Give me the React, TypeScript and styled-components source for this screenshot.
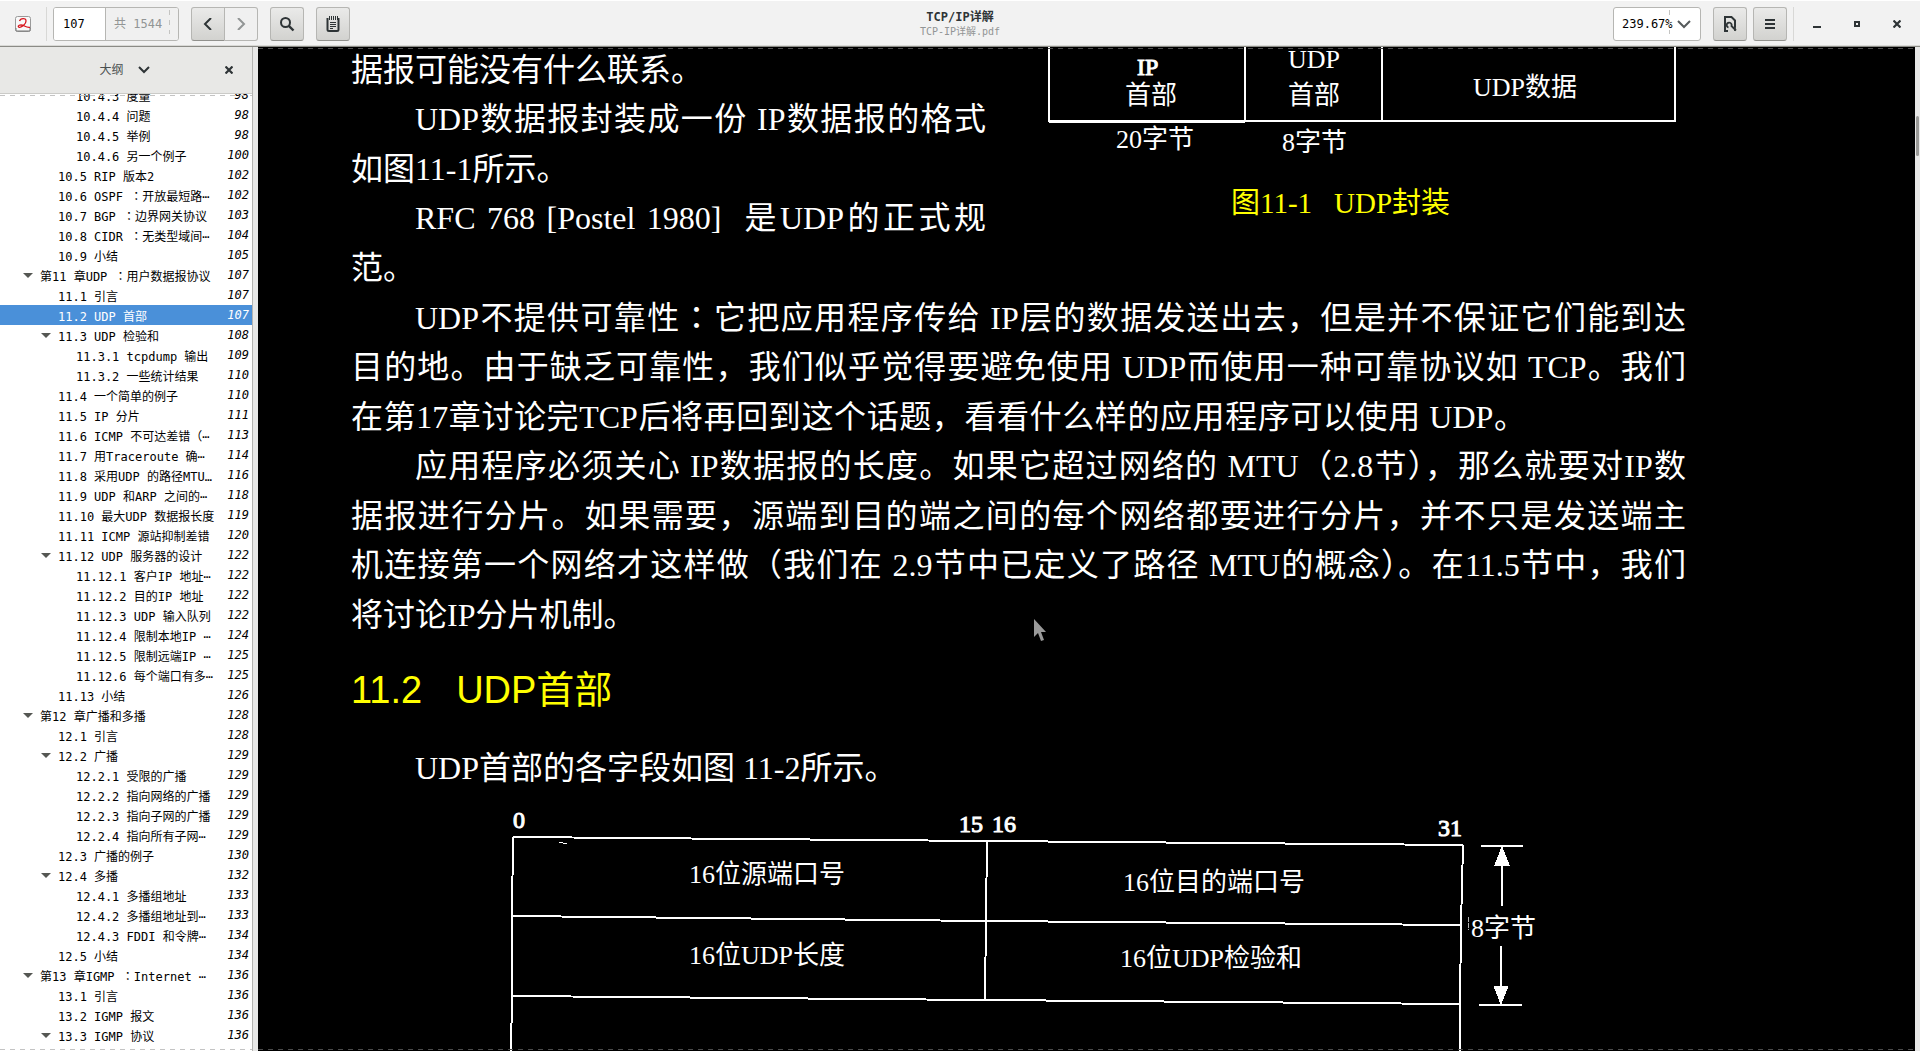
import React from "react";
import styled, { createGlobalStyle, css } from "styled-components";

const ui = `"DejaVu Sans Mono", "Noto Sans CJK SC", monospace`;
const serif = `"Liberation Serif", "Noto Sans CJK SC", serif`;
const sans = `"Liberation Sans", "Noto Sans CJK SC", sans-serif`;

const GlobalStyle = createGlobalStyle`
  *, *::before, *::after { box-sizing: border-box; }
  body { margin: 0; font: 12px/20px ${ui}; color: #000; background: #000; }
  button, input { font: inherit; color: inherit; margin: 0; }
  button { padding: 0; border: 0; background: none; }
`;

const Window = styled.div`
  display: flex;
  flex-direction: column;
  height: 100vh;
  overflow: hidden;
`;

/* ---------- title bar ---------- */

const HeaderBar = styled.header`
  display: grid;
  grid-template-columns: 1fr auto 1fr;
  align-items: center;
  flex: none;
  height: 47px;
  background: #f2f2f2;
  border-top: 1px solid #fff;
  border-bottom: 1px solid #8b8b86;
  box-shadow: inset 0 -1px #d9d9d6;
`;

const Group = styled.div<{ $end?: boolean }>`
  display: flex;
  align-items: center;
  justify-content: ${(p) => (p.$end ? "flex-end" : "flex-start")};
`;

const AppIcon = styled.svg`
  display: block;
  width: 16px;
  height: 16px;
  margin: 0 15px;
`;

const Separator = styled.div`
  width: 1px;
  height: 34px;
  background: #d8d8d6;
`;

const Entry = styled.div<{ $width: number }>`
  display: flex;
  align-items: center;
  width: ${(p) => p.$width}px;
  height: 34px;
  background: #fff;
  border: 1px solid #b6b6b3;
  border-radius: 3px;
  overflow: hidden;
`;

const PageInput = styled.input`
  width: 52px;
  height: 100%;
  padding: 0 9px;
  border: 0;
  border-right: 1px solid #b6b6b3;
  background: #fff;
`;

const dashedEdge = css`
  content: "";
  position: absolute;
  top: 2px;
  bottom: 6px;
  width: 1px;
  background: repeating-linear-gradient(to bottom, #c4c4c2 0 5px, transparent 5px 10px);
`;

const PageTotal = styled.span`
  position: relative;
  flex: 1;
  align-self: stretch;
  padding-left: 8px;
  line-height: 32px;
  color: #929595;
  background: #f0f0f0;
  &::after { ${dashedEdge} right: 8px; }
`;

const ZoomField = styled.label`
  position: relative;
  height: 100%;
  &::after { ${dashedEdge} right: 4px; }
`;

const ZoomInput = styled.input`
  width: 60px;
  height: 100%;
  padding: 0 0 0 8px;
  border: 0;
  background: transparent;
`;

const DropButton = styled.button`
  flex: 1;
  height: 100%;
  display: grid;
  place-items: center start;
  padding-left: 3px;
`;

const ToolButton = styled.button<{ $flat?: boolean; $side?: "left" | "right" }>`
  display: grid;
  place-items: center;
  width: ${(p) => (p.$side === "right" ? 33 : 34)}px;
  height: 34px;
  border: 1px solid #b6b6b3;
  border-bottom-color: ${(p) => (p.$flat ? "#b6b6b3" : "#91918d")};
  border-radius: ${(p) =>
    p.$side === "left" ? "3px 0 0 3px" : p.$side === "right" ? "0 3px 3px 0" : "3px"};
  border-left-width: ${(p) => (p.$side === "right" ? 0 : 1)}px;
  background: ${(p) => (p.$flat ? "#f0f0f0" : "linear-gradient(#eaeae9, #d2d2cf)")};
`;

const Nav = styled.div`
  display: flex;
  margin: 0 12px;
`;

const LeftTools = styled.div`
  display: flex;
  gap: 12px;
`;

const RightTools = styled.div`
  display: flex;
  gap: 6px;
  margin: 0 6px 0 12px;
`;

const PageBox = styled.div`
  margin-left: 6px;
`;

const WindowControls = styled.div`
  display: flex;
  gap: 16px;
  padding: 0 11px;
`;

const WindowButton = styled.button`
  display: grid;
  place-items: center;
  width: 24px;
  height: 24px;
`;

const Titles = styled.div`
  text-align: center;
`;

const Title = styled.h1`
  margin: 0;
  font-size: 12px;
  font-weight: 700;
  line-height: 16px;
  color: #2e3436;
`;

const Subtitle = styled.div`
  font-size: 10px;
  line-height: 14px;
  color: #929595;
`;

/* ---------- outline ---------- */

const Body = styled.div`
  display: flex;
  flex: 1;
  min-height: 0;
`;

const Sidebar = styled.aside`
  display: flex;
  flex-direction: column;
  flex: none;
  width: 253px;
  background: #fff;
  border-right: 1px solid #b4b4b1;
`;

const Handle = styled.div`
  flex: none;
  width: 5px;
  background: #e8e8e7;
`;

const SidebarHeader = styled.div`
  display: grid;
  grid-template-columns: 1fr auto;
  align-items: center;
  flex: none;
  height: 47px;
  padding: 0 17px 0 26px;
  background: #e8e8e6;
  border-bottom: 1px solid #cbcbc8;
`;

const OutlineButton = styled.button`
  display: flex;
  align-items: center;
  justify-content: center;
  gap: 14px;
  color: #4a4f50;
`;

const CloseButton = styled.button`
  display: grid;
  place-items: center;
  width: 12px;
  height: 24px;
`;

const dashes = (color: string) => css`
  position: relative;
  &::before, &::after {
    content: "";
    position: absolute;
    z-index: 1;
    left: 0;
    right: 0;
    height: 1px;
    background: repeating-linear-gradient(to right, ${color} 0 5px, transparent 5px 10px);
  }
  &::before { top: 1px; }
  &::after { bottom: 1px; }
`;

const TreePane = styled.nav`
  flex: 1;
  min-height: 0;
  overflow: hidden;
  ${dashes("#c4c4c4")}
`;

const Tree = styled.ul`
  list-style: none;
  margin: -9px 0 0;
  padding: 0;
`;

const Row = styled.button<{ $level: number; $selected: boolean }>`
  display: flex;
  width: 100%;
  height: 20px;
  padding: 0 3px 0 ${(p) => 5 + p.$level * 18}px;
  white-space: pre;
  text-align: left;
  color: ${(p) => (p.$selected ? "#fff" : "#000")};
  background: ${(p) => (p.$selected ? "#4a90d9" : "transparent")};
`;

const Expander = styled.span<{ $open: boolean }>`
  align-self: center;
  width: 10px;
  margin-right: 7px;
  border: 5px solid transparent;
  border-bottom-width: 0;
  border-top-color: ${(p) => (p.$open ? "#555753" : "transparent")};
`;

const RowLabel = styled.span`
  flex: 1;
  line-height: 25px;
`;

const RowPage = styled.span`
  font-style: italic;
  line-height: 21px;
`;

/* The colon sits in the middle of its cell. */
const Colon = styled.span`
  font-family: "Noto Sans CJK TC", sans-serif;
  line-height: 0;
`;

const withColon = (text: string) => {
  const [before, after] = text.split("：");
  return after === undefined ? (
    text
  ) : (
    <>
      {before}
      <Colon>：</Colon>
      {after}
    </>
  );
};

type Item = [level: number, label: string, page: number, open?: boolean];

const outline: Item[] = [
  [3, "10.4.3 度量", 98],
  [3, "10.4.4 问题", 98],
  [3, "10.4.5 举例", 98],
  [3, "10.4.6 另一个例子", 100],
  [2, "10.5 RIP 版本2", 102],
  [2, "10.6 OSPF ：开放最短路⋯", 102],
  [2, "10.7 BGP ：边界网关协议", 103],
  [2, "10.8 CIDR ：无类型域间⋯", 104],
  [2, "10.9 小结", 105],
  [1, "第11 章UDP ：用户数据报协议", 107, true],
  [2, "11.1 引言", 107],
  [2, "11.2 UDP 首部", 107],
  [2, "11.3 UDP 检验和", 108, true],
  [3, "11.3.1 tcpdump 输出", 109],
  [3, "11.3.2 一些统计结果", 110],
  [2, "11.4 一个简单的例子", 110],
  [2, "11.5 IP 分片", 111],
  [2, "11.6 ICMP 不可达差错（⋯", 113],
  [2, "11.7 用Traceroute 确⋯", 114],
  [2, "11.8 采用UDP 的路径MTU…", 116],
  [2, "11.9 UDP 和ARP 之间的⋯", 118],
  [2, "11.10 最大UDP 数据报长度", 119],
  [2, "11.11 ICMP 源站抑制差错", 120],
  [2, "11.12 UDP 服务器的设计", 122, true],
  [3, "11.12.1 客户IP 地址⋯", 122],
  [3, "11.12.2 目的IP 地址", 122],
  [3, "11.12.3 UDP 输入队列", 122],
  [3, "11.12.4 限制本地IP ⋯", 124],
  [3, "11.12.5 限制远端IP ⋯", 125],
  [3, "11.12.6 每个端口有多⋯", 125],
  [2, "11.13 小结", 126],
  [1, "第12 章广播和多播", 128, true],
  [2, "12.1 引言", 128],
  [2, "12.2 广播", 129, true],
  [3, "12.2.1 受限的广播", 129],
  [3, "12.2.2 指向网络的广播", 129],
  [3, "12.2.3 指向子网的广播", 129],
  [3, "12.2.4 指向所有子网⋯", 129],
  [2, "12.3 广播的例子", 130],
  [2, "12.4 多播", 132, true],
  [3, "12.4.1 多播组地址", 133],
  [3, "12.4.2 多播组地址到⋯", 133],
  [3, "12.4.3 FDDI 和令牌⋯", 134],
  [2, "12.5 小结", 134],
  [1, "第13 章IGMP ：Internet ⋯", 136, true],
  [2, "13.1 引言", 136],
  [2, "13.2 IGMP 报文", 136],
  [2, "13.3 IGMP 协议", 136, true],
];

/* ---------- document ---------- */

const Viewer = styled.main`
  flex: 1;
  min-width: 0;
  overflow: hidden;
  background: #000;
  ${dashes("#4a4a4a")}
`;

const Page = styled.article`
  margin-top: -2px;
  padding: 0 229px 0 93px;
  color: #fff;
  font: 32px/50px ${serif};
`;

const Opening = styled.section`
  display: grid;
  grid-template-columns: 635px 1fr;
  column-gap: 54px;
`;

const TextBlock = styled.div``;

const Line = styled.div<{ $indent?: boolean; $last?: boolean; $short?: boolean }>`
  white-space: nowrap;
  text-indent: ${(p) => (p.$indent ? "2em" : 0)};
  padding-right: ${(p) => (p.$short ? 160 : 0)}px;
  text-align: justify;
  text-align-last: ${(p) => (p.$last ? "left" : "justify")};
  &:nth-child(even) { line-height: 49px; }
`;

const Figure = styled.figure`
  margin: 0;
`;

const Drawing = styled.svg`
  display: block;
  fill: none;
  stroke: #fff;
  stroke-width: 2;
  shape-rendering: crispEdges;
`;

const Label = styled.text<{ $heavy?: boolean }>`
  fill: #fff;
  stroke: ${(p) => (p.$heavy ? "#fff" : "none")};
  stroke-width: 1;
  font: ${(p) => (p.$heavy ? 24 : 26)}px ${serif};
`;

const Caption = styled.figcaption`
  display: flex;
  gap: 22px;
  margin-top: 19px;
  padding-left: 191px;
  font-size: 29px;
  line-height: 36px;
  color: #ff0;
`;

const Heading = styled.h2`
  display: flex;
  gap: 34px;
  margin: 25px 0 29px;
  font: 400 38px/50px ${sans};
  color: #ff0;
`;

const HeaderFigure = styled(Figure)`
  margin: 13px 0 0 149px;
`;

const Scrollbar = styled.div`
  flex: none;
  width: 5px;
  padding: 69px 1px 0;
  background: #e8e8e7;
`;

const Thumb = styled.div`
  height: 40px;
  border-radius: 2px;
  background: #9a9a98;
`;

const Pointer = styled.svg`
  position: absolute;
  left: 775px;
  top: 571px;
  width: 14px;
  height: 24px;
`;

const ink = "#2e3436";

const Chevron = ({ d, color = ink, w = 12, h = 12 }: { d: string; color?: string; w?: number; h?: number }) => (
  <svg width={w} height={h} viewBox={`0 0 ${w} ${h}`} fill="none" stroke={color} strokeWidth="2">
    <path d={d} />
  </svg>
);

const Cross = () => (
  <svg width="8" height="8" viewBox="0 0 8 8" fill="none" stroke={ink} strokeWidth="2.2">
    <path d="M.5.5l7 7M7.5.5l-7 7" />
  </svg>
);

export default function App() {
  return (
    <Window>
      <GlobalStyle />
      <HeaderBar>
        <Group>
          <AppIcon viewBox="0 0 16 16">
            <rect x=".5" y=".5" width="15" height="15" rx="2" fill="#f8f8f8" stroke="#9a9a9a" />
            <path d="M1 12v2.500q0 .5.5.5h13q.5 0 .5-.5V12" fill="none" stroke="#777" />
            <path
              d="M4.500 5C5.500 2 11 1.500 11 5C11 8 7 11.500 4.500 11.300C2.500 11 3 8.800 6 8.800C9 9 11 12 15 11.300"
              fill="none"
              stroke="#d8141c"
              strokeWidth="1.300"
            />
          </AppIcon>
          <Separator />
          <PageBox>
            <Entry $width={126}>
              <PageInput aria-label="页码" defaultValue="107" />
              <PageTotal>共 1544</PageTotal>
            </Entry>
          </PageBox>
          <Nav>
            <ToolButton $side="left" aria-label="上一页">
              <Chevron d="M9 0L3 6l6 6" />
            </ToolButton>
            <ToolButton $side="right" $flat aria-label="下一页">
              <Chevron d="M3 0l6 6-6 6" color="#929595" />
            </ToolButton>
          </Nav>
          <LeftTools>
            <ToolButton aria-label="查找">
              <svg width="16" height="16" viewBox="0 0 16 16" fill="none" stroke={ink}>
                <circle cx="6.500" cy="6.500" r="4.500" strokeWidth="2" />
                <path d="M9.800 9.800l4.700 4.700" strokeWidth="2.400" />
              </svg>
            </ToolButton>
            <ToolButton aria-label="批注">
              <svg width="16" height="18" viewBox="0 0 16 18" fill="none" stroke={ink}>
                <path d="M2.500 3v11.500q0 1.500 1.500 1.500h8q1.500 0 1.500-1.500V3" strokeWidth="2" />
                <path d="M4.500 1v4M6.500 1v4M8.500 1v4M10.500 1v4M12.500 1v4" />
                <path d="M5 7.500h6M5 9.500h6M5 11.500h6M5 13.500h3" />
              </svg>
            </ToolButton>
          </LeftTools>
        </Group>
        <Titles>
          <Title>TCP/IP详解</Title>
          <Subtitle>TCP-IP详解.pdf</Subtitle>
        </Titles>
        <Group $end>
          <Entry $width={88}>
            <ZoomField>
              <ZoomInput aria-label="缩放" defaultValue="239.67%" />
            </ZoomField>
            <DropButton aria-label="缩放级别">
              <Chevron d="M1 2l6 6 6-6" w={14} h={10} color="#555a5b" />
            </DropButton>
          </Entry>
          <RightTools>
            <ToolButton aria-label="文档">
              <svg width="14" height="16" viewBox="0 0 14 16" fill="none" stroke={ink} strokeWidth="2">
                <path d="M5 15H2V1h6.500L12 4.500V11" />
                <path d="M5.500 11.500A2.500 2.500 0 1 1 8.500 10L13 14.500M12 8v7" strokeWidth="1.800" />
              </svg>
            </ToolButton>
            <ToolButton aria-label="菜单">
              <svg width="10" height="10" viewBox="0 0 10 10" fill={ink}>
                <path d="M0 0h10v2H0zM0 4h10v2H0zM0 8h10v2H0z" />
              </svg>
            </ToolButton>
          </RightTools>
          <Separator />
          <WindowControls>
            <WindowButton aria-label="最小化">
              <svg width="8" height="8" viewBox="0 0 8 8"><path d="M0 6h8v2H0z" fill={ink} /></svg>
            </WindowButton>
            <WindowButton aria-label="最大化">
              <svg width="6" height="6" viewBox="0 0 6 6" fill="none" stroke={ink} strokeWidth="2">
                <path d="M1 1h4v4H1z" />
              </svg>
            </WindowButton>
            <WindowButton aria-label="关闭"><Cross /></WindowButton>
          </WindowControls>
        </Group>
      </HeaderBar>

      <Body>
        <Sidebar>
          <SidebarHeader>
            <OutlineButton>
              大纲
              <Chevron d="M1 1l5 5 5-5" h={8} />
            </OutlineButton>
            <CloseButton aria-label="关闭侧栏"><Cross /></CloseButton>
          </SidebarHeader>
          <TreePane>
            <Tree>
              {outline.map(([level, label, page, open]) => (
                <li key={label}>
                  <Row $level={level} $selected={label === "11.2 UDP 首部"}>
                    <Expander $open={!!open} />
                    <RowLabel>{withColon(label)}</RowLabel>
                    <RowPage>{page}</RowPage>
                  </Row>
                </li>
              ))}
            </Tree>
          </TreePane>
        </Sidebar>
        <Handle />

        <Viewer>
          <Page>
            <Opening>
              <TextBlock>
                <Line $last>据报可能没有什么联系。</Line>
                <Line $indent>UDP数据报封装成一份 IP数据报的格式</Line>
                <Line $last>如图11-1所示。</Line>
                <Line $indent>RFC 768 [Postel 1980]&nbsp; 是UDP的正式规</Line>
                <Line $last>范。</Line>
              </TextBlock>
              <Figure>
                <Drawing width="646" height="121" viewBox="0 0 646 121">
                  <path d="M9 0V77M205 0V77M342 0V77M635 0V77" />
                  <path d="M8 76H636" />
                  <path d="M9 77H205" />
                  <Label x="97" y="30" $heavy>IP</Label>
                  <Label x="85" y="59">首部</Label>
                  <Label x="248" y="23">UDP</Label>
                  <Label x="248" y="59">首部</Label>
                  <Label x="433" y="51">UDP数据</Label>
                  <Label x="76" y="103">20字节</Label>
                  <Label x="242" y="106">8字节</Label>
                </Drawing>
                <Caption>
                  <span>图11-1</span>
                  <span>UDP封装</span>
                </Caption>
              </Figure>
            </Opening>

            <TextBlock>
              <Line $indent>{withColon("UDP不提供可靠性：它把应用程序传给 IP层的数据发送出去，但是并不保证它们能到达")}</Line>
              <Line>目的地。由于缺乏可靠性，我们似乎觉得要避免使用 UDP而使用一种可靠协议如 TCP。我们</Line>
              <Line $short>在第17章讨论完TCP后将再回到这个话题，看看什么样的应用程序可以使用 UDP。</Line>
              <Line $indent>应用程序必须关心 IP数据报的长度。如果它超过网络的 MTU（2.8节），那么就要对IP数</Line>
              <Line>据报进行分片。如果需要，源端到目的端之间的每个网络都要进行分片，并不只是发送端主</Line>
              <Line>机连接第一个网络才这样做（我们在 2.9节中已定义了路径 MTU的概念）。在11.5节中，我们</Line>
              <Line $last>将讨论IP分片机制。</Line>
            </TextBlock>

            <Heading>
              <span>11.2</span>
              <span>UDP首部</span>
            </Heading>
            <Line $indent $last>UDP首部的各字段如图 11-2所示。</Line>

            <HeaderFigure>
              <Drawing width="1045" height="245" viewBox="0 0 1045 245">
                <path d="M13 31L487 35L963 39M13 110L487 115L961 119M12 190L485 194L960 198" />
                <path d="M13 31L12 110L12 190L11 245M487 35L486 110L485 194M963 39L961 119L960 198L960 245" />
                <path d="M59 36h3l1 1h4" strokeWidth="1" />
                <path d="M968 111v13" strokeWidth="1" strokeDasharray="5 1" opacity=".7" />
                <path d="M981 40h42M979 199h43M1002 58v42M1001 140v42" />
                <path d="M1002 41l7 18h-14zM1001 198l7-18h-14z" fill="#fff" strokeWidth="1" />
                <Label x="13" y="22" $heavy>0</Label>
                <Label x="459" y="26" $heavy>15</Label>
                <Label x="492" y="26" $heavy>16</Label>
                <Label x="938" y="30" $heavy>31</Label>
                <Label x="189" y="77">16位源端口号</Label>
                <Label x="189" y="158">16位UDP长度</Label>
                <Label x="623" y="85">16位目的端口号</Label>
                <Label x="620" y="161">16位UDP检验和</Label>
                <Label x="971" y="131">8字节</Label>
              </Drawing>
            </HeaderFigure>
          </Page>
          <Pointer viewBox="0 0 14 24">
            <path d="M1 1v18l4-4 3 8 3-1-3-8h5z" fill="#999" />
          </Pointer>
        </Viewer>
        <Scrollbar>
          <Thumb />
        </Scrollbar>
      </Body>
    </Window>
  );
}
